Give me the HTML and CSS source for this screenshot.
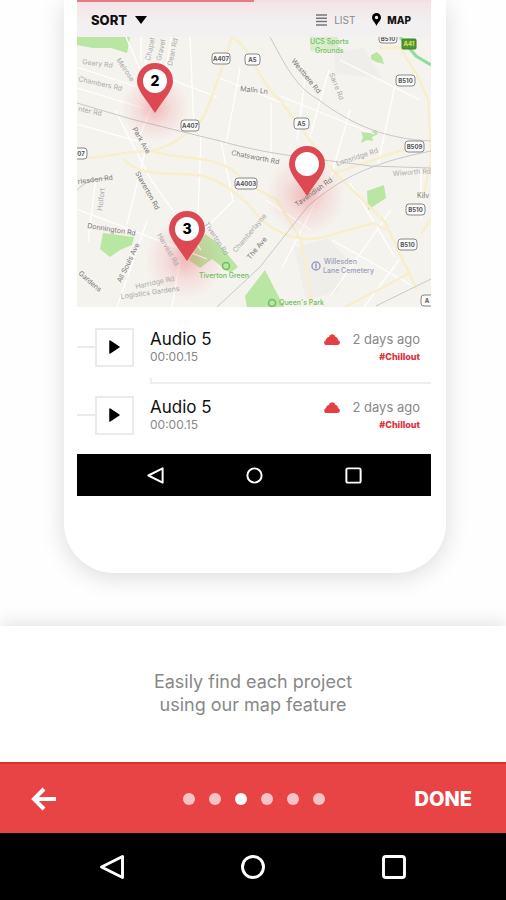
FILE: index.html
```html
<!DOCTYPE html>
<html lang="en">
<head>
<meta charset="UTF-8">
<meta name="viewport" content="width=device-width, initial-scale=1.0">
<title>Map feature</title>
<link rel="stylesheet" href="styles.css">
</head>
<body>
<main class="stage">
    <div class="phone">
        <div class="progress"><div class="progress-bar"></div></div>
        <div class="toolbar">
            <button class="sort">SORT
                <svg width="12" height="8" viewBox="0 0 12 8"><path d="M0 0h12L6 8z"/></svg>
            </button>
            <button class="view">
                <svg width="11" height="12" viewBox="0 0 11 12"><path d="M0 1h11M0 4.3h11M0 7.6h11M0 11h11" stroke="#777" stroke-width="1.5"/></svg>
                LIST
            </button>
            <button class="view active">
                <svg width="9" height="13" viewBox="0 0 9 13"><path fill-rule="evenodd" d="M4.5 0A4.5 4.5 0 0 0 0 4.5C0 7.5 3 9 4.5 13 6 9 9 7.5 9 4.5A4.5 4.5 0 0 0 4.5 0zM4.5 2.8a1.7 1.7 0 1 1 0 3.4 1.7 1.7 0 0 1 0-3.4z"/></svg>
                MAP
            </button>
        </div>

        <div class="map">
            <svg class="map-art" viewBox="77 37 354 270">
                <defs>
                    <radialGradient id="glow">
                        <stop offset="0" stop-color="#e8505a" stop-opacity=".36"/>
                        <stop offset=".5" stop-color="#e8505a" stop-opacity=".13"/>
                        <stop offset="1" stop-color="#e8505a" stop-opacity="0"/>
                    </radialGradient>
                </defs>
                <rect x="77" y="37" width="354" height="270" fill="#f5f3ee"/>
                <!-- built up areas -->
                <path fill="#efeeeb" d="M334 52l30-4 18 30-46-4zM294 248l34-10 18 20-8 34-32 8z"/>
                <!-- parks -->
                <g fill="#b9e6a3">
                    <path d="M77 37h53l-3 16-16-5H93l-16-3z"/>
                    <path d="M310 37h28v12l-28 2z" opacity=".45"/>
                    <path d="M371 55l6-3 5 5 2 7-8-2-5-3z"/>
                    <path d="M361 132l8 1 7-3 2 4-6 3 1 4-6-1-6 3 2-6z"/>
                    <path d="M367 191l17-6 2 13-18 12z"/>
                    <path d="M103 233l31 4-2 8-12 5-10 7-10-8z"/>
                    <path d="M205 234l13 9 20 24-8 6-18-14-12 9-11-8z"/>
                    <path d="M265 270l19 37h-37l-2-11z"/>
                </g>
                <!-- small streets -->
                <g fill="none" stroke="#fff" stroke-width="1.3">
                    <path d="M77 67l60 20M77 88l66 20M126 37l28 65-17 40M141 37v25M154 37l-9 28M171 37l-6 40 52 20M190 37l4 92M217 77l70 28M240 68l-14 77M77 124l70 20-20 80M96 177l-8 65M115 110l36 70 50 70M77 209l130 50M147 221l-30 86M180 260l-8 47M201 135l-3 80M221 141l12 60-30 30M271 103v56M280 96l94 38M305 80l-8 60M329 70l-20 70M340 60l80 40M350 110l-20 70M395 85l-17 80M350 183l45 74M327 180l-45 88M266 200l45 30M332 240l79 45M391 210l-60 85M399 260l-35 47M421 170v50"/>
                </g>
                <!-- main roads -->
                <g fill="none" stroke="#f7efcb" stroke-width="2.5">
                    <path d="M77 158c25 1 45-7 74-7 23-5 37-19 50-30 11-18 21-55 31-84"/>
                    <path d="M232 37c18 8 29 50 49 64l34 46 20 26 50 49 32 68"/>
                    <path d="M151 151c30 10 69 2 90 27 11 10 24 15 36 22l24 40 12 67"/>
                    <path d="M123 159c20 22 66 11 83 18 23 8 31 18 43 28 18 25 45 39 75 32l49-14 13 7"/>
                    <path d="M335 173l70-24M380 48l20 0 16 25 12 26 3 60-8 40M431 219l-10 15M345 307l65-34"/>
                </g>
                <path d="M400 37l16 19 15 9" fill="none" stroke="#8edd9a" stroke-width="3"/>
                <!-- railways -->
                <g fill="none" stroke="#c9c8c5">
                    <path d="M77 103l54 16 89 22c50 14 90 17 151 25l60 2"/>
                    <path d="M270 37c14 25 24 49 49 63 33 25 67 39 112 41"/>
                    <path d="M217 307l43-40 48-61c30-25 57-42 123-55"/>
                    <path d="M376 306l55-27"/>
                    <path d="M77 190c8-8 16-11 30-12"/>
                </g>

                <circle cx="155" cy="108" r="34" fill="url(#glow)"/>
                <circle cx="306" cy="195" r="40" fill="url(#glow)"/>
                <circle cx="185" cy="259" r="40" fill="url(#glow)"/>

                <!-- street names -->
                <g class="street">
                    <text transform="translate(82 64) rotate(7)">Geary Rd</text>
                    <text transform="translate(78 81) rotate(13)">Chambers Rd</text>
                    <text transform="translate(78 111) rotate(12)">nter Rd</text>
                    <text transform="translate(116 60) rotate(56)">Melrose</text>
                    <text transform="translate(150 61) rotate(-78)">Chapel</text>
                    <text transform="translate(161 61) rotate(-78)">Gravel</text>
                    <text transform="translate(172 66) rotate(-78)">Dean Rd</text>
                    <text transform="translate(136 289) rotate(-12)">Harridge Rd</text>
                    <text transform="translate(121 299) rotate(-8)">Logistics Gardens</text>
                    <text transform="translate(157 235) rotate(60)">Harvest Rd</text>
                    <text transform="translate(204 224) rotate(57)">Tiverton Rd</text>
                    <text transform="translate(236 253) rotate(-50)">Chamberlayne</text>
                    <text transform="translate(329 74) rotate(68)">Sarre Rd</text>
                    <text transform="translate(337 166) rotate(-18)">Lonsridge Rd</text>
                    <text transform="translate(393 176) rotate(-4)">Wiworth Rd</text>
                    <text transform="translate(102 211) rotate(-83)">Holfort</text>
                </g>
                <g class="street dark">
                    <text transform="translate(240 91) rotate(6)">Malin Ln</text>
                    <text transform="translate(291 61) rotate(51)">Westbere Rd</text>
                    <text transform="translate(132 129) rotate(60)">Park Ave</text>
                    <text transform="translate(231 155) rotate(11)">Chatsworth Rd</text>
                    <text transform="translate(297 207) rotate(-36)">Tavendish Rd</text>
                    <text transform="translate(135 173) rotate(61)">Staverton Rd</text>
                    <text transform="translate(78 184) rotate(-7)">rlesden Rd</text>
                    <text transform="translate(87 228) rotate(9)">Donnington Rd</text>
                    <text transform="translate(121 283) rotate(-64)">All Souls Ave</text>
                    <text transform="translate(78 274) rotate(41)">Gardens</text>
                    <text transform="translate(250 260) rotate(-50)">The Ave</text>
                    <text x="417" y="198">Kilv</text>
                </g>
                <!-- places -->
                <g class="place green">
                    <text x="310" y="44">UCS Sports</text>
                    <text x="315" y="53">Grounds</text>
                    <text x="199" y="278">Tiverton Green</text>
                    <text x="279" y="305">Queen's Park</text>
                    <circle cx="226" cy="266" r="3.5"/>
                    <circle cx="272" cy="303" r="3.5"/>
                </g>
                <g class="place blue">
                    <text x="324" y="264">Willesden</text>
                    <text x="323" y="273">Lane Cemetery</text>
                    <circle cx="316" cy="266" r="4"/>
                    <path d="M316 263.5v5"/>
                </g>
                <!-- road numbers -->
                <g class="shield">
                    <rect x="212" y="53" width="18" height="11" rx="3"/><text x="221" y="61">A407</text>
                    <rect x="245" y="54" width="15" height="11" rx="3"/><text x="252.5" y="62">A5</text>
                    <rect x="379" y="32" width="18" height="11" rx="3"/><text x="388" y="41">B510</text>
                    <rect x="396" y="75" width="19" height="11" rx="3"/><text x="405.5" y="83">B510</text>
                    <rect x="181" y="120" width="18" height="11" rx="3"/><text x="190" y="128">A407</text>
                    <rect x="69" y="148" width="18" height="11" rx="3"/><text x="81" y="156">07</text>
                    <rect x="235" y="178" width="22" height="11" rx="3"/><text x="246" y="186">A4003</text>
                    <rect x="294" y="118" width="15" height="11" rx="3"/><text x="301.5" y="126">A5</text>
                    <rect x="405" y="141" width="19" height="11" rx="3"/><text x="414.5" y="149">B509</text>
                    <rect x="406" y="204" width="19" height="11" rx="3"/><text x="415.5" y="212">B510</text>
                    <rect x="398" y="239" width="19" height="11" rx="3"/><text x="407.5" y="247">B510</text>
                    <rect x="421" y="295" width="16" height="11" rx="3"/><text x="427" y="303">A</text>
                    <rect class="trunk" x="402" y="39" width="14" height="10" rx="1"/><text class="trunk-text" x="409" y="46">A41</text>
                </g>
            </svg>
            <button class="pin pin-two" aria-label="2 projects">
                <svg viewBox="0 0 36 50"><path d="M18 0a18 18 0 0 0-18 18c0 9 9 18 18 32 9-14 18-23 18-32A18 18 0 0 0 18 0z" fill="#dc4953"/><circle cx="18" cy="18" r="12" fill="#fff"/><text x="18" y="23">2</text></svg>
            </button>
            <button class="pin pin-one" aria-label="1 project">
                <svg viewBox="0 0 36 50"><path d="M18 0a18 18 0 0 0-18 18c0 9 9 18 18 32 9-14 18-23 18-32A18 18 0 0 0 18 0z" fill="#dc4953"/><circle cx="18" cy="18" r="12" fill="#fff"/></svg>
            </button>
            <button class="pin pin-three" aria-label="3 projects">
                <svg viewBox="0 0 36 50"><path d="M18 0a18 18 0 0 0-18 18c0 9 9 18 18 32 9-14 18-23 18-32A18 18 0 0 0 18 0z" fill="#dc4953"/><circle cx="18" cy="18" r="12" fill="#fff"/><text x="18" y="23">3</text></svg>
            </button>
        </div>

        <div class="tracks">
            <div class="track">
                <span class="line"></span>
                <button class="play" aria-label="Play Audio 5">
                    <svg width="11" height="14" viewBox="0 0 11 14"><path d="M1 1l9 6-9 6z" stroke="#000" stroke-width="1.5" stroke-linejoin="round"/></svg>
                </button>
                <div class="track-body">
                    <div class="track-name">
                        <div class="title">Audio 5</div>
                        <div class="time">00:00.15</div>
                    </div>
                    <div class="track-meta">
                        <div class="age">
                            <svg width="16" height="11" viewBox="0 0 16 11"><path d="M2.6 11C-.4 11-.6 7 2 6.300 2.200 4 3.600 3 5 3 6-.6 10.500-.6 11.500 3c1.800.2 2.500 1.600 2.400 3 2.800.8 2.600 5-.6 5z" fill="#e53e43"/></svg>
                            2 days ago
                        </div>
                        <a class="tag" href="#">#Chillout</a>
                    </div>
                </div>
            </div>
            <div class="track">
                <span class="line"></span>
                <button class="play" aria-label="Play Audio 5">
                    <svg width="11" height="14" viewBox="0 0 11 14"><path d="M1 1l9 6-9 6z" stroke="#000" stroke-width="1.5" stroke-linejoin="round"/></svg>
                </button>
                <div class="track-body">
                    <div class="track-name">
                        <div class="title">Audio 5</div>
                        <div class="time">00:00.15</div>
                    </div>
                    <div class="track-meta">
                        <div class="age">
                            <svg width="16" height="11" viewBox="0 0 16 11"><path d="M2.6 11C-.4 11-.6 7 2 6.300 2.200 4 3.600 3 5 3 6-.6 10.500-.6 11.500 3c1.800.2 2.500 1.600 2.400 3 2.800.8 2.600 5-.6 5z" fill="#e53e43"/></svg>
                            2 days ago
                        </div>
                        <a class="tag" href="#">#Chillout</a>
                    </div>
                </div>
            </div>
        </div>

        <div class="android-nav small">
            <button aria-label="Back"><svg viewBox="0 0 24 24"><path d="M21 3v18L3 12z"/></svg></button>
            <button aria-label="Home"><svg viewBox="0 0 24 24"><circle cx="12" cy="12" r="9"/></svg></button>
            <button aria-label="Recent apps"><svg viewBox="0 0 24 24"><rect x="3" y="3" width="18" height="18" rx="2"/></svg></button>
        </div>
    </div>
</main>

<p class="caption">Easily find each project<br>using our map feature</p>

<div class="pager">
    <button class="back" aria-label="Previous">
        <svg width="26" height="24" viewBox="0 0 26 24"><path d="M13 2L3 12l10 10M3 12h22" fill="none" stroke="#fff" stroke-width="4"/></svg>
    </button>
    <div class="dots">
        <button class="dot" aria-label="Page 1"></button>
        <button class="dot" aria-label="Page 2"></button>
        <button class="dot current" aria-label="Page 3"></button>
        <button class="dot" aria-label="Page 4"></button>
        <button class="dot" aria-label="Page 5"></button>
        <button class="dot" aria-label="Page 6"></button>
    </div>
    <button class="done">DONE</button>
</div>

<div class="android-nav">
    <button aria-label="Back"><svg viewBox="0 0 24 24"><path d="M21 3v18L3 12z"/></svg></button>
    <button aria-label="Home"><svg viewBox="0 0 24 24"><circle cx="12" cy="12" r="9"/></svg></button>
    <button aria-label="Recent apps"><svg viewBox="0 0 24 24"><rect x="3" y="3" width="18" height="18" rx="2"/></svg></button>
</div>
</body>
</html>
```
FILE: styles.css
```css
body {
    display: flex;
    flex-direction: column;
    min-height: 100vh;
    margin: 0;
    background-color: #fefefe;
    color: #111;
    font-family: Inter, "Liberation Sans", sans-serif;
}
button {
    padding: 0;
    border: none;
    background: none;
    color: inherit;
    font-family: inherit;
    cursor: pointer;
}
svg {
    display: block;
}
.stage {
    padding: 0 60px 53px 64px;
}
/* Phone mockup */
.phone {
    padding: 0 15px 77px 13px;
    border-radius: 0 0 50px 50px;
    background-color: #fff;
    box-shadow: 0 4px 24px rgba(0, 0, 0, 0.14);
}
.progress {
    height: 2px;
    background-color: #f3dfe2;
}
.progress-bar {
    width: 50%;
    height: 2px;
    background-color: #e27c80;
}
.toolbar {
    display: flex;
    align-items: center;
    gap: 17px;
    height: 35px;
    padding: 0 20px 0 14px;
    background: linear-gradient(#f4e3e6, #f2f0f1 60%);
}
.sort {
    display: flex;
    align-items: center;
    gap: 8px;
    margin-right: auto;
    font-size: 13px;
    font-weight: 800;
}
.view {
    display: flex;
    align-items: center;
    gap: 7px;
    color: #888;
    font-size: 10px;
}
.view.active {
    gap: 6px;
    color: #111;
    font-weight: 800;
}
/* Map */
.map {
    position: relative;
}
.map-art {
    width: 100%;
}
.street {
    fill: #aaa;
    font-size: 7px;
}
.dark {
    fill: #777;
}
.place {
    font-size: 7px;
    font-weight: 500;
}
.place circle,
.place path {
    fill: none;
    stroke-width: 1.5px;
}
.green {
    fill: #6fbd5c;
}
.green circle {
    stroke: #6fbd5c;
}
.blue {
    fill: #989dba;
}
.blue circle,
.blue path {
    stroke: #989dba;
}
.shield {
    font-size: 6px;
    font-weight: 700;
    text-anchor: middle;
}
.shield rect {
    fill: #fafafa;
    stroke: #888;
}
.shield text {
    fill: #555;
}
.shield .trunk {
    fill: #4c9a35;
    stroke: #3b7f2a;
}
.shield .trunk-text {
    fill: #e5e05a;
}
.pin {
    position: absolute;
    width: 36px;
    height: 50px;
    transform: translate(-50%, -100%);
}
.pin text {
    font-size: 14px;
    font-weight: 800;
    text-anchor: middle;
}
.pin-two {
    left: 22%;
    top: 28%;
}
.pin-one {
    left: 65%;
    top: 59%;
}
.pin-three {
    left: 31%;
    top: 83%;
}
/* Recordings */
.tracks {
    padding: 6px 0 5px;
}
.track {
    display: flex;
    align-items: center;
    height: 68px;
}
.line {
    width: 18px;
    height: 2px;
    background-color: #ebebeb;
}
.play {
    display: flex;
    align-items: center;
    justify-content: center;
    width: 39px;
    height: 39px;
    margin-right: 16px;
    border: 2px solid #ebebeb;
}
.track-body {
    display: flex;
    flex: 1;
    justify-content: space-between;
    box-sizing: border-box;
    height: 74px;
    padding: 20px 11px 0 0;
}
.track:first-child .track-body {
    border-bottom: 2px solid #eee;
    background: linear-gradient(#eee, #eee) left bottom / 2px 4px no-repeat;
}
.title {
    font-size: 17px;
    line-height: 18px;
}
.time {
    color: #888;
    font-size: 12px;
    line-height: 18px;
}
.track-meta {
    text-align: right;
}
.age {
    display: flex;
    align-items: center;
    gap: 12px;
    color: #888;
    font-size: 13px;
    line-height: 18px;
}
.tag {
    display: block;
    color: #d9343c;
    font-size: 9px;
    font-weight: 800;
    line-height: 18px;
    text-decoration: none;
}
/* Android buttons */
.android-nav {
    display: flex;
    flex: 1;
    align-items: center;
    justify-content: center;
    gap: 113px;
    min-height: 67px;
    background-color: #000;
}
.android-nav svg {
    width: 28px;
    height: 28px;
    fill: none;
    stroke: #fff;
    stroke-width: 2.5px;
    stroke-linejoin: round;
}
.android-nav.small {
    gap: 80px;
    min-height: 42px;
}
.android-nav.small svg {
    width: 19px;
    height: 19px;
}
/* Caption */
.caption {
    margin: 0;
    padding: 44px 20px 46px;
    background-color: #fff;
    box-shadow: 0 -4px 16px rgba(0, 0, 0, 0.1);
    color: #888;
    font-size: 18px;
    line-height: 23px;
    text-align: center;
}
/* Pager */
.pager {
    display: grid;
    grid-template-columns: 1fr auto 1fr;
    align-items: center;
    box-sizing: border-box;
    height: 71px;
    padding: 0 34px 0 31px;
    border-top: 2px solid #d9302c;
    background-color: #e84446;
    color: #fff;
}
.back {
    justify-self: start;
}
.dots {
    display: flex;
    gap: 14px;
    padding-left: 4px;
}
.dot {
    width: 12px;
    height: 12px;
    border-radius: 50%;
    background-color: #f6c4c7;
}
.dot.current {
    background-color: #fff;
}
.done {
    justify-self: end;
    font-size: 20px;
    font-weight: 800;
}
```
